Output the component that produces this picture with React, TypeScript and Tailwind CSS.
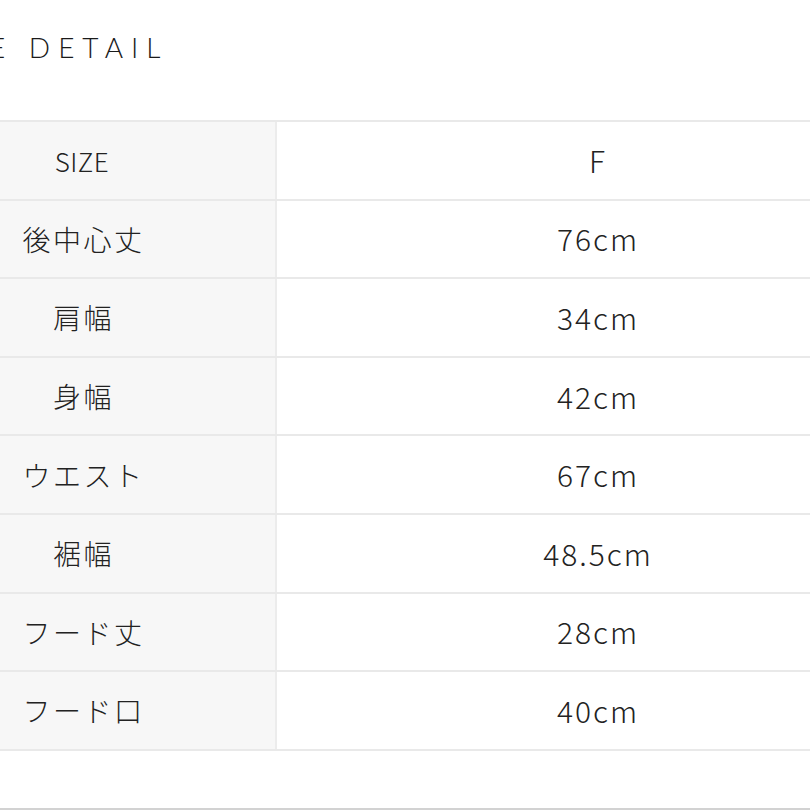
import React from "react";

const rows: [string, string][] = [
  ["SIZE", "F"],
  ["後中心丈", "76cm"],
  ["肩幅", "34cm"],
  ["身幅", "42cm"],
  ["ウエスト", "67cm"],
  ["裾幅", "48.5cm"],
  ["フード丈", "28cm"],
  ["フード口", "40cm"],
];

export default function App() {
  return (
    <div className="w-[810px] h-[810px] overflow-hidden bg-white flex flex-col text-[#222]">
      <div
        className="h-[120px] pt-[27px] ml-[-74px] whitespace-nowrap text-[28px] leading-[40px] tracking-[8px] font-light text-[#1a1a1a]"
        style={{ fontFamily: "Lato, 'Noto Sans', sans-serif" }}
      >
        SIZE DETAIL
      </div>
      <div
        className="ml-[-111px] w-[1030px] border-t-2 border-[#e9e9e9] flex flex-col"
        style={{ fontFamily: "'Noto Sans CJK JP', 'Noto Sans', sans-serif" }}
      >
        {rows.map(([k, v], i) => (
          <div key={k} className="h-[78.6px] flex border-b-2 border-[#e9e9e9]">
            <div
              className={
                i === 0
                  ? "w-[388px] bg-[#f7f7f7] border-r-2 border-[#ececec] flex items-center justify-center text-[26px] tracking-[0.5px] font-light"
                  : "w-[388px] bg-[#f7f7f7] border-r-2 border-[#ececec] flex items-center justify-center pl-[3px] text-[28px] tracking-[2.5px] font-light"
              }
            >
              {k}
            </div>
            <div className="flex-1 flex items-center justify-center text-[30px] tracking-[2px] font-light">
              {v}
            </div>
          </div>
        ))}
      </div>
      <div className="mt-auto h-[2px] bg-[#d2d2d2]" />
    </div>
  );
}
